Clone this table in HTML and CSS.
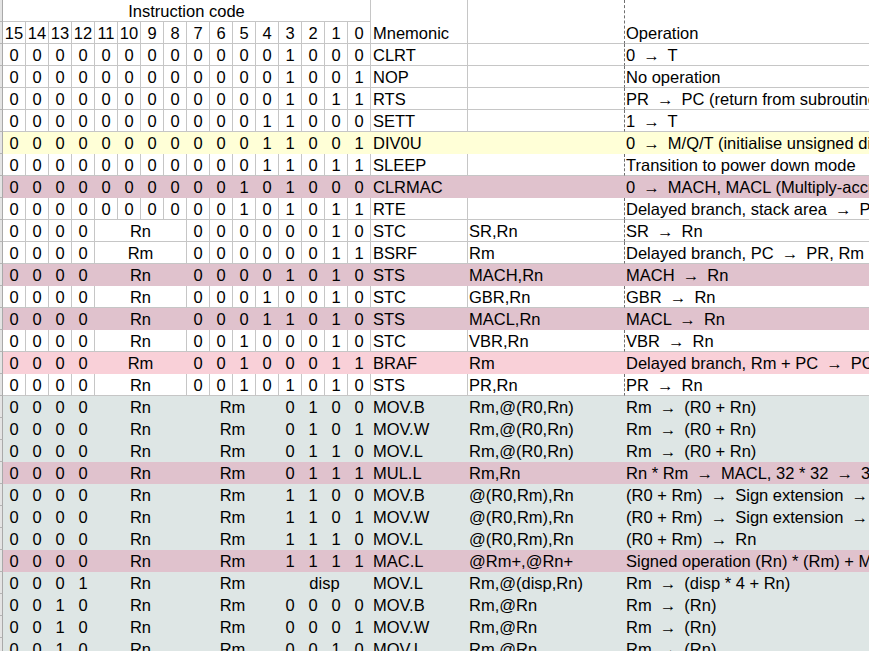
FILE: index.html
```html
<!DOCTYPE html>
<html lang="en">
<head>
<meta charset="utf-8">
<title>Instruction code</title>
<link rel="stylesheet" href="styles.css">
</head>
<body>
<div class="sheet">
  <div class="head">
    <span class="rh r1"></span>
    <span class="rh r2"></span>
    <span class="cell title">Instruction code</span>
    <span class="cell hmn">Mnemonic</span>
    <span class="cell hopd"></span>
    <span class="cell hde">Operation</span>
    <span class="cell b">15</span><span class="cell b">14</span><span class="cell b">13</span><span class="cell b">12</span><span class="cell b">11</span><span class="cell b">10</span><span class="cell b">9</span><span class="cell b">8</span><span class="cell b">7</span><span class="cell b">6</span><span class="cell b">5</span><span class="cell b">4</span><span class="cell b">3</span><span class="cell b">2</span><span class="cell b">1</span><span class="cell b">0</span>
  </div>

  <div class="row"><span class="rh"></span><span class="cell b">0</span><span class="cell b">0</span><span class="cell b">0</span><span class="cell b">0</span><span class="cell b">0</span><span class="cell b">0</span><span class="cell b">0</span><span class="cell b">0</span><span class="cell b">0</span><span class="cell b">0</span><span class="cell b">0</span><span class="cell b">0</span><span class="cell b">1</span><span class="cell b">0</span><span class="cell b">0</span><span class="cell b">0</span><span class="cell mn">CLRT</span><span class="cell opd"></span><span class="cell de">0 <span class="ar">→</span> T</span></div>
  <div class="row"><span class="rh"></span><span class="cell b">0</span><span class="cell b">0</span><span class="cell b">0</span><span class="cell b">0</span><span class="cell b">0</span><span class="cell b">0</span><span class="cell b">0</span><span class="cell b">0</span><span class="cell b">0</span><span class="cell b">0</span><span class="cell b">0</span><span class="cell b">0</span><span class="cell b">1</span><span class="cell b">0</span><span class="cell b">0</span><span class="cell b">1</span><span class="cell mn">NOP</span><span class="cell opd"></span><span class="cell de">No operation</span></div>
  <div class="row"><span class="rh"></span><span class="cell b">0</span><span class="cell b">0</span><span class="cell b">0</span><span class="cell b">0</span><span class="cell b">0</span><span class="cell b">0</span><span class="cell b">0</span><span class="cell b">0</span><span class="cell b">0</span><span class="cell b">0</span><span class="cell b">0</span><span class="cell b">0</span><span class="cell b">1</span><span class="cell b">0</span><span class="cell b">1</span><span class="cell b">1</span><span class="cell mn">RTS</span><span class="cell opd"></span><span class="cell de">PR <span class="ar">→</span> PC (return from subroutine)</span></div>
  <div class="row"><span class="rh"></span><span class="cell b">0</span><span class="cell b">0</span><span class="cell b">0</span><span class="cell b">0</span><span class="cell b">0</span><span class="cell b">0</span><span class="cell b">0</span><span class="cell b">0</span><span class="cell b">0</span><span class="cell b">0</span><span class="cell b">0</span><span class="cell b">1</span><span class="cell b">1</span><span class="cell b">0</span><span class="cell b">0</span><span class="cell b">0</span><span class="cell mn">SETT</span><span class="cell opd"></span><span class="cell de">1 <span class="ar">→</span> T</span></div>
  <div class="row y"><span class="rh"></span><span class="cell b">0</span><span class="cell b">0</span><span class="cell b">0</span><span class="cell b">0</span><span class="cell b">0</span><span class="cell b">0</span><span class="cell b">0</span><span class="cell b">0</span><span class="cell b">0</span><span class="cell b">0</span><span class="cell b">0</span><span class="cell b">1</span><span class="cell b">1</span><span class="cell b">0</span><span class="cell b">0</span><span class="cell b">1</span><span class="cell mn">DIV0U</span><span class="cell opd"></span><span class="cell de">0 <span class="ar">→</span> M/Q/T (initialise unsigned division)</span></div>
  <div class="row"><span class="rh"></span><span class="cell b">0</span><span class="cell b">0</span><span class="cell b">0</span><span class="cell b">0</span><span class="cell b">0</span><span class="cell b">0</span><span class="cell b">0</span><span class="cell b">0</span><span class="cell b">0</span><span class="cell b">0</span><span class="cell b">0</span><span class="cell b">1</span><span class="cell b">1</span><span class="cell b">0</span><span class="cell b">1</span><span class="cell b">1</span><span class="cell mn">SLEEP</span><span class="cell opd"></span><span class="cell de">Transition to power down mode</span></div>
  <div class="row m"><span class="rh"></span><span class="cell b">0</span><span class="cell b">0</span><span class="cell b">0</span><span class="cell b">0</span><span class="cell b">0</span><span class="cell b">0</span><span class="cell b">0</span><span class="cell b">0</span><span class="cell b">0</span><span class="cell b">0</span><span class="cell b">1</span><span class="cell b">0</span><span class="cell b">1</span><span class="cell b">0</span><span class="cell b">0</span><span class="cell b">0</span><span class="cell mn">CLRMAC</span><span class="cell opd"></span><span class="cell de">0 <span class="ar">→</span> MACH, MACL (Multiply-accumulate register clear)</span></div>
  <div class="row"><span class="rh"></span><span class="cell b">0</span><span class="cell b">0</span><span class="cell b">0</span><span class="cell b">0</span><span class="cell b">0</span><span class="cell b">0</span><span class="cell b">0</span><span class="cell b">0</span><span class="cell b">0</span><span class="cell b">0</span><span class="cell b">1</span><span class="cell b">0</span><span class="cell b">1</span><span class="cell b">0</span><span class="cell b">1</span><span class="cell b">1</span><span class="cell mn">RTE</span><span class="cell opd"></span><span class="cell de">Delayed branch, stack area <span class="ar">→</span> PC/SR</span></div>
  <div class="row"><span class="rh"></span><span class="cell b">0</span><span class="cell b">0</span><span class="cell b">0</span><span class="cell b">0</span><span class="cell b s4">Rn</span><span class="cell b">0</span><span class="cell b">0</span><span class="cell b">0</span><span class="cell b">0</span><span class="cell b">0</span><span class="cell b">0</span><span class="cell b">1</span><span class="cell b">0</span><span class="cell mn">STC</span><span class="cell opd">SR,Rn</span><span class="cell de">SR <span class="ar">→</span> Rn</span></div>
  <div class="row"><span class="rh"></span><span class="cell b">0</span><span class="cell b">0</span><span class="cell b">0</span><span class="cell b">0</span><span class="cell b s4">Rm</span><span class="cell b">0</span><span class="cell b">0</span><span class="cell b">0</span><span class="cell b">0</span><span class="cell b">0</span><span class="cell b">0</span><span class="cell b">1</span><span class="cell b">1</span><span class="cell mn">BSRF</span><span class="cell opd">Rm</span><span class="cell de">Delayed branch, PC <span class="ar">→</span> PR, Rm + PC <span class="ar">→</span> PC</span></div>
  <div class="row m"><span class="rh"></span><span class="cell b">0</span><span class="cell b">0</span><span class="cell b">0</span><span class="cell b">0</span><span class="cell b s4">Rn</span><span class="cell b">0</span><span class="cell b">0</span><span class="cell b">0</span><span class="cell b">0</span><span class="cell b">1</span><span class="cell b">0</span><span class="cell b">1</span><span class="cell b">0</span><span class="cell mn">STS</span><span class="cell opd">MACH,Rn</span><span class="cell de">MACH <span class="ar">→</span> Rn</span></div>
  <div class="row"><span class="rh"></span><span class="cell b">0</span><span class="cell b">0</span><span class="cell b">0</span><span class="cell b">0</span><span class="cell b s4">Rn</span><span class="cell b">0</span><span class="cell b">0</span><span class="cell b">0</span><span class="cell b">1</span><span class="cell b">0</span><span class="cell b">0</span><span class="cell b">1</span><span class="cell b">0</span><span class="cell mn">STC</span><span class="cell opd">GBR,Rn</span><span class="cell de">GBR <span class="ar">→</span> Rn</span></div>
  <div class="row m"><span class="rh"></span><span class="cell b">0</span><span class="cell b">0</span><span class="cell b">0</span><span class="cell b">0</span><span class="cell b s4">Rn</span><span class="cell b">0</span><span class="cell b">0</span><span class="cell b">0</span><span class="cell b">1</span><span class="cell b">1</span><span class="cell b">0</span><span class="cell b">1</span><span class="cell b">0</span><span class="cell mn">STS</span><span class="cell opd">MACL,Rn</span><span class="cell de">MACL <span class="ar">→</span> Rn</span></div>
  <div class="row"><span class="rh"></span><span class="cell b">0</span><span class="cell b">0</span><span class="cell b">0</span><span class="cell b">0</span><span class="cell b s4">Rn</span><span class="cell b">0</span><span class="cell b">0</span><span class="cell b">1</span><span class="cell b">0</span><span class="cell b">0</span><span class="cell b">0</span><span class="cell b">1</span><span class="cell b">0</span><span class="cell mn">STC</span><span class="cell opd">VBR,Rn</span><span class="cell de">VBR <span class="ar">→</span> Rn</span></div>
  <div class="row p"><span class="rh"></span><span class="cell b">0</span><span class="cell b">0</span><span class="cell b">0</span><span class="cell b">0</span><span class="cell b s4">Rm</span><span class="cell b">0</span><span class="cell b">0</span><span class="cell b">1</span><span class="cell b">0</span><span class="cell b">0</span><span class="cell b">0</span><span class="cell b">1</span><span class="cell b">1</span><span class="cell mn">BRAF</span><span class="cell opd">Rm</span><span class="cell de">Delayed branch, Rm + PC <span class="ar">→</span> PC</span></div>
  <div class="row"><span class="rh"></span><span class="cell b">0</span><span class="cell b">0</span><span class="cell b">0</span><span class="cell b">0</span><span class="cell b s4">Rn</span><span class="cell b">0</span><span class="cell b">0</span><span class="cell b">1</span><span class="cell b">0</span><span class="cell b">1</span><span class="cell b">0</span><span class="cell b">1</span><span class="cell b">0</span><span class="cell mn">STS</span><span class="cell opd">PR,Rn</span><span class="cell de">PR <span class="ar">→</span> Rn</span></div>
  <div class="row g"><span class="rh"></span><span class="cell b">0</span><span class="cell b">0</span><span class="cell b">0</span><span class="cell b">0</span><span class="cell b s4">Rn</span><span class="cell b s4">Rm</span><span class="cell b">0</span><span class="cell b">1</span><span class="cell b">0</span><span class="cell b">0</span><span class="cell mn">MOV.B</span><span class="cell opd">Rm,@(R0,Rn)</span><span class="cell de">Rm <span class="ar">→</span> (R0 + Rn)</span></div>
  <div class="row g"><span class="rh"></span><span class="cell b">0</span><span class="cell b">0</span><span class="cell b">0</span><span class="cell b">0</span><span class="cell b s4">Rn</span><span class="cell b s4">Rm</span><span class="cell b">0</span><span class="cell b">1</span><span class="cell b">0</span><span class="cell b">1</span><span class="cell mn">MOV.W</span><span class="cell opd">Rm,@(R0,Rn)</span><span class="cell de">Rm <span class="ar">→</span> (R0 + Rn)</span></div>
  <div class="row g"><span class="rh"></span><span class="cell b">0</span><span class="cell b">0</span><span class="cell b">0</span><span class="cell b">0</span><span class="cell b s4">Rn</span><span class="cell b s4">Rm</span><span class="cell b">0</span><span class="cell b">1</span><span class="cell b">1</span><span class="cell b">0</span><span class="cell mn">MOV.L</span><span class="cell opd">Rm,@(R0,Rn)</span><span class="cell de">Rm <span class="ar">→</span> (R0 + Rn)</span></div>
  <div class="row m"><span class="rh"></span><span class="cell b">0</span><span class="cell b">0</span><span class="cell b">0</span><span class="cell b">0</span><span class="cell b s4">Rn</span><span class="cell b s4">Rm</span><span class="cell b">0</span><span class="cell b">1</span><span class="cell b">1</span><span class="cell b">1</span><span class="cell mn">MUL.L</span><span class="cell opd">Rm,Rn</span><span class="cell de">Rn * Rm <span class="ar">→</span> MACL, 32 * 32 <span class="ar">→</span> 32 bits</span></div>
  <div class="row g"><span class="rh"></span><span class="cell b">0</span><span class="cell b">0</span><span class="cell b">0</span><span class="cell b">0</span><span class="cell b s4">Rn</span><span class="cell b s4">Rm</span><span class="cell b">1</span><span class="cell b">1</span><span class="cell b">0</span><span class="cell b">0</span><span class="cell mn">MOV.B</span><span class="cell opd">@(R0,Rm),Rn</span><span class="cell de">(R0 + Rm) <span class="ar">→</span> Sign extension <span class="ar">→</span> Rn</span></div>
  <div class="row g"><span class="rh"></span><span class="cell b">0</span><span class="cell b">0</span><span class="cell b">0</span><span class="cell b">0</span><span class="cell b s4">Rn</span><span class="cell b s4">Rm</span><span class="cell b">1</span><span class="cell b">1</span><span class="cell b">0</span><span class="cell b">1</span><span class="cell mn">MOV.W</span><span class="cell opd">@(R0,Rm),Rn</span><span class="cell de">(R0 + Rm) <span class="ar">→</span> Sign extension <span class="ar">→</span> Rn</span></div>
  <div class="row g"><span class="rh"></span><span class="cell b">0</span><span class="cell b">0</span><span class="cell b">0</span><span class="cell b">0</span><span class="cell b s4">Rn</span><span class="cell b s4">Rm</span><span class="cell b">1</span><span class="cell b">1</span><span class="cell b">1</span><span class="cell b">0</span><span class="cell mn">MOV.L</span><span class="cell opd">@(R0,Rm),Rn</span><span class="cell de">(R0 + Rm) <span class="ar">→</span> Rn</span></div>
  <div class="row m"><span class="rh"></span><span class="cell b">0</span><span class="cell b">0</span><span class="cell b">0</span><span class="cell b">0</span><span class="cell b s4">Rn</span><span class="cell b s4">Rm</span><span class="cell b">1</span><span class="cell b">1</span><span class="cell b">1</span><span class="cell b">1</span><span class="cell mn">MAC.L</span><span class="cell opd">@Rm+,@Rn+</span><span class="cell de">Signed operation (Rn) * (Rm) + MAC <span class="ar">→</span> MAC</span></div>
  <div class="row g"><span class="rh"></span><span class="cell b">0</span><span class="cell b">0</span><span class="cell b">0</span><span class="cell b">1</span><span class="cell b s4">Rn</span><span class="cell b s4">Rm</span><span class="cell b s4">disp</span><span class="cell mn">MOV.L</span><span class="cell opd">Rm,@(disp,Rn)</span><span class="cell de">Rm <span class="ar">→</span> (disp * 4 + Rn)</span></div>
  <div class="row g"><span class="rh"></span><span class="cell b">0</span><span class="cell b">0</span><span class="cell b">1</span><span class="cell b">0</span><span class="cell b s4">Rn</span><span class="cell b s4">Rm</span><span class="cell b">0</span><span class="cell b">0</span><span class="cell b">0</span><span class="cell b">0</span><span class="cell mn">MOV.B</span><span class="cell opd">Rm,@Rn</span><span class="cell de">Rm <span class="ar">→</span> (Rn)</span></div>
  <div class="row g"><span class="rh"></span><span class="cell b">0</span><span class="cell b">0</span><span class="cell b">1</span><span class="cell b">0</span><span class="cell b s4">Rn</span><span class="cell b s4">Rm</span><span class="cell b">0</span><span class="cell b">0</span><span class="cell b">0</span><span class="cell b">1</span><span class="cell mn">MOV.W</span><span class="cell opd">Rm,@Rn</span><span class="cell de">Rm <span class="ar">→</span> (Rn)</span></div>
  <div class="row g"><span class="rh"></span><span class="cell b">0</span><span class="cell b">0</span><span class="cell b">1</span><span class="cell b">0</span><span class="cell b s4">Rn</span><span class="cell b s4">Rm</span><span class="cell b">0</span><span class="cell b">0</span><span class="cell b">1</span><span class="cell b">0</span><span class="cell mn">MOV.L</span><span class="cell opd">Rm,@Rn</span><span class="cell de">Rm <span class="ar">→</span> (Rn)</span></div>
</div>
</body>
</html>
```

FILE: styles.css
```css
html, body {
  margin: 0;
  padding: 0;
  background: #ffffff;
  overflow: hidden;
}

.sheet {
  width: 1040px;
  font-family: "Liberation Sans", Arial, sans-serif;
  font-size: 16.5px;
  color: #000000;
}

.head,
.row {
  display: grid;
  grid-template-columns: 3px repeat(16, 23px) 97px 157px 400px;
}

.head {
  grid-template-rows: 22px 22px;
}

.row {
  height: 22px;
}

.rh {
  box-sizing: border-box;
  background: #e4e4e4;
  border-right: 1px solid #a9a9a9;
  border-bottom: 1px solid #b4b4b4;
  grid-column: 1;
}

.head .r1 { grid-row: 1; }
.head .r2 { grid-row: 2; }

.cell {
  box-sizing: border-box;
  display: flex;
  align-items: flex-start;
  height: 22px;
  padding-top: 2px;
  line-height: 18px;
  white-space: nowrap;
  overflow: hidden;
  border-right: 1px solid #c6c6c6;
  border-bottom: 1px solid #c6c6c6;
}

.b {
  justify-content: center;
}

.s4 {
  grid-column: span 4;
}

.mn {
  padding-left: 2px;
}

.opd {
  padding-left: 1px;
  border-right: 1px dashed #6f6f6f;
}

.de {
  display: block;
  padding-left: 1px;
  border-right: none;
  overflow: visible;
}

.ar {
  margin: 0 3.5px;
}

/* header */
.title {
  grid-column: 2 / span 16;
  grid-row: 1;
  justify-content: center;
}

.hmn,
.hopd,
.hde {
  grid-row: 1 / span 2;
  height: 44px;
  padding-top: 24px;
}

.hmn {
  grid-column: 18;
  padding-left: 2px;
}

.hopd {
  grid-column: 19;
  border-right: 1px dashed #6f6f6f;
}

.hde {
  grid-column: 20;
  padding-left: 1px;
  border-right: none;
}

.head .b {
  grid-row: 2;
}

/* coloured rows hide the grid lines */
.row.y > .cell,
.row.m > .cell,
.row.p > .cell,
.row.g > .cell {
  border-color: transparent;
}

.row.y > .cell { background: #ffffd7; }
.row.m > .cell { background: #e0c2cd; }
.row.p > .cell { background: #f9d0d8; }
.row.g > .cell { background: #dee6e5; }
```
